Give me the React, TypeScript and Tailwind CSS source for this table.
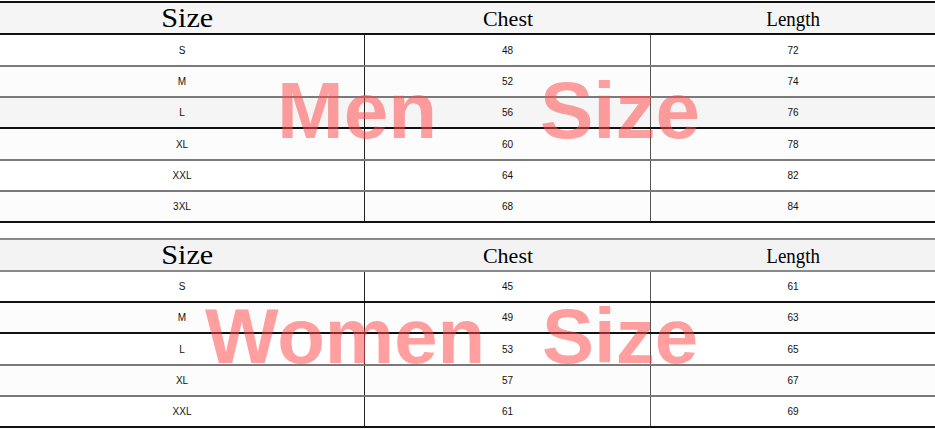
type Row = { size: string; chest: string; length: string; h: string; bg: string; line: string };

const men: Row[] = [
  { size: 'S', chest: '48', length: '72', h: 'h-[32px]', bg: 'bg-white', line: 'border-[#7a7a7a]' },
  { size: 'M', chest: '52', length: '74', h: 'h-[31px]', bg: 'bg-[#fcfcfc]', line: 'border-[#7a7a7a]' },
  { size: 'L', chest: '56', length: '76', h: 'h-[31px]', bg: 'bg-[#f5f5f5]', line: 'border-[#111]' },
  { size: 'XL', chest: '60', length: '78', h: 'h-[32px]', bg: 'bg-[#fcfcfc]', line: 'border-[#7a7a7a]' },
  { size: 'XXL', chest: '64', length: '82', h: 'h-[31px]', bg: 'bg-white', line: 'border-[#7a7a7a]' },
  { size: '3XL', chest: '68', length: '84', h: 'h-[31px]', bg: 'bg-[#fcfcfc]', line: 'border-[#111]' },
];

const women: Row[] = [
  { size: 'S', chest: '45', length: '61', h: 'h-[31px]', bg: 'bg-white', line: 'border-[#111]' },
  { size: 'M', chest: '49', length: '63', h: 'h-[31px]', bg: 'bg-[#fcfcfc]', line: 'border-[#111]' },
  { size: 'L', chest: '53', length: '65', h: 'h-[32px]', bg: 'bg-white', line: 'border-[#7a7a7a]' },
  { size: 'XL', chest: '57', length: '67', h: 'h-[31px]', bg: 'bg-[#fcfcfc]', line: 'border-[#7a7a7a]' },
  { size: 'XXL', chest: '61', length: '69', h: 'h-[31px]', bg: 'bg-white', line: 'border-[#111]' },
];

function Header({ className }: { className: string }) {
  return (
    <div className={`grid grid-cols-[365px_286px_1fr] h-[34px] border-y-2 ${className}`}>
      <div className="flex items-center justify-center pl-[10px] pt-[1px]">
        <span className="inline-block scale-x-[1.12] text-[27px] leading-none text-black" style={{ fontFamily: '"Liberation Serif", serif' }}>
          Size
        </span>
      </div>
      <div className="flex items-center justify-center pt-[1px]">
        <span className="inline-block text-[22px] leading-none text-black" style={{ fontFamily: '"Liberation Serif", serif' }}>
          Chest
        </span>
      </div>
      <div className="flex items-center justify-center pt-[1px]">
        <span className="inline-block scale-x-[0.86] text-[22px] leading-none text-black" style={{ fontFamily: '"Liberation Serif", serif' }}>
          Length
        </span>
      </div>
    </div>
  );
}

function Body({ rows }: { rows: Row[] }) {
  return (
    <>
      {rows.map((r) => (
        <div key={r.size} className={`grid grid-cols-[365px_286px_1fr] border-b-2 ${r.h} ${r.bg} ${r.line} text-[10px] text-[#111]`}>
          <div className="flex items-center justify-center border-r border-[#222]">{r.size}</div>
          <div className="flex items-center justify-center border-r border-[#555]">{r.chest}</div>
          <div className="flex items-center justify-center">{r.length}</div>
        </div>
      ))}
    </>
  );
}

export default function App() {
  return (
    <div className="w-[935px] h-[429px] overflow-hidden bg-white" style={{ fontFamily: '"Liberation Sans", Arial, sans-serif' }}>
      <div className="relative pt-[1px]">
        <Header className="border-[#111] bg-[#f5f5f5]" />
        <Body rows={men} />
        <span className="pointer-events-none absolute left-[277px] top-[71px] text-[80px] font-bold leading-none text-[rgba(255,70,70,0.52)]">Men</span>
        <span className="pointer-events-none absolute left-[540px] top-[71px] text-[80px] font-bold leading-none text-[rgba(255,70,70,0.52)]">Size</span>
      </div>
      <div className="relative mt-[15px]">
        <Header className="border-[#8a8a8a] bg-[#f3f3f3]" />
        <Body rows={women} />
        <span className="pointer-events-none absolute left-[205px] top-[59px] text-[78px] font-bold leading-none text-[rgba(255,70,70,0.52)]">Women</span>
        <span className="pointer-events-none absolute left-[542px] top-[59px] text-[78px] font-bold leading-none text-[rgba(255,70,70,0.52)]">Size</span>
      </div>
    </div>
  );
}
